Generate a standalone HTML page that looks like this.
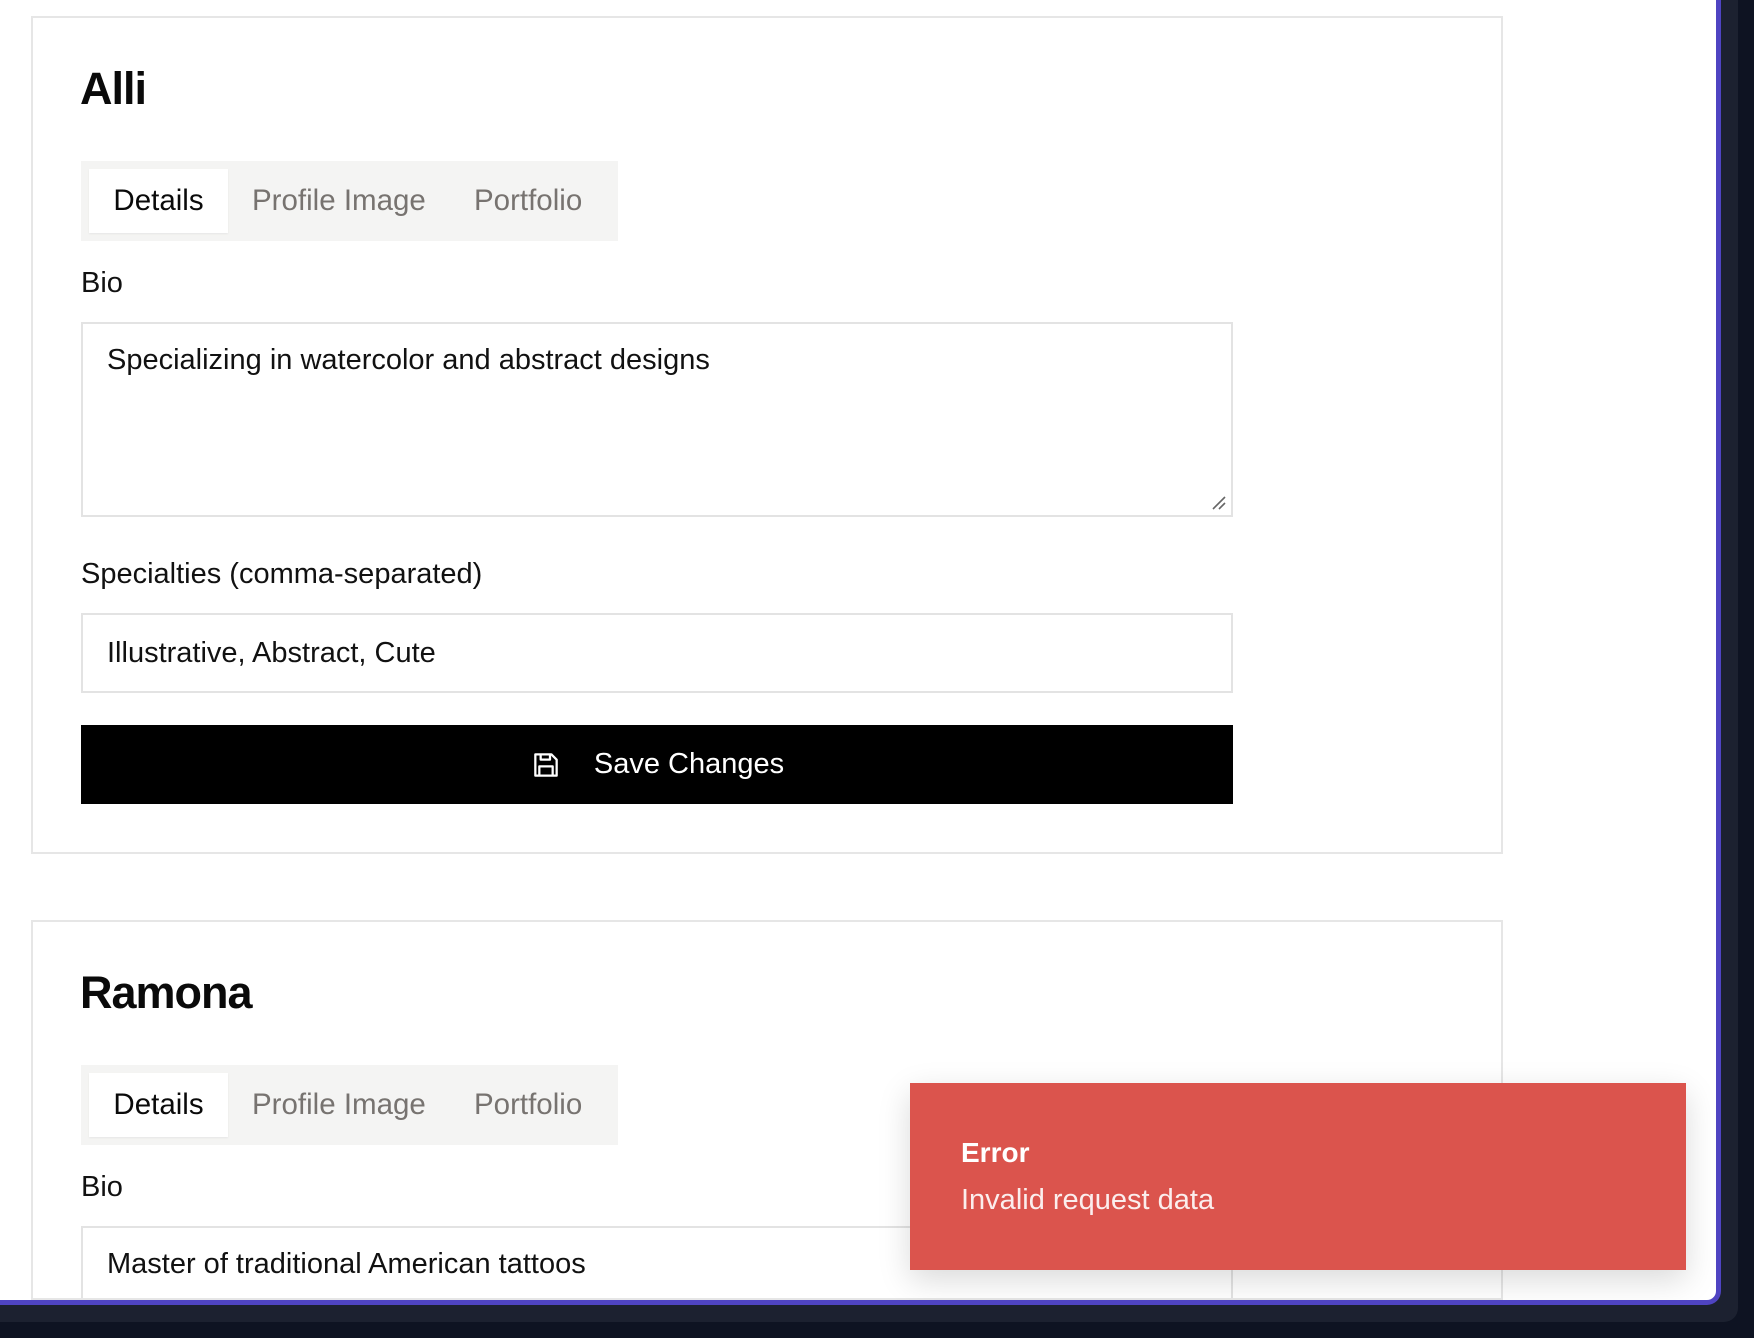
<!DOCTYPE html>
<html><head><meta charset="utf-8"><style>
*{box-sizing:border-box;margin:0;padding:0}
html,body{width:1754px;height:1338px;overflow:hidden;background:#0e1322;font-family:"Liberation Sans",sans-serif}
.outer{position:absolute;left:0;top:0;width:1738px;height:1322px;background:#1c2130;border-bottom-right-radius:14px}
.panel{position:absolute;left:-20px;top:-20px;width:1741px;height:1325px;background:#fff;border:5px solid #4f44c2;border-top:none;border-left:none;border-bottom-right-radius:14px;overflow:hidden}
.card{position:absolute;left:51px;width:1472px;border:2px solid #e6e6e6;background:#fff;overflow:hidden}
.abs{position:absolute}
h2{position:absolute;left:47px;font-size:45px;font-weight:bold;color:#0a0a0a;letter-spacing:-1px}
.tabs{position:absolute;left:48px;width:537px;height:80px;background:#f4f4f3}
.tab{position:absolute;top:0;height:80px;line-height:80px;font-size:29.5px;color:#777370}
.tab.act{top:8px;height:64px;line-height:64px;background:#fff;color:#0a0a0a;left:8px;width:139px;text-align:center;box-shadow:0 1px 2px rgba(0,0,0,.06)}
.label{position:absolute;left:48px;font-size:29px;color:#111}
.box{position:absolute;left:48px;width:1152px;border:2px solid #e3e3e3;font-size:29px;color:#111;padding-left:24px}
.btn{position:absolute;left:48px;width:1152px;height:79px;background:#000;color:#fff;font-size:29px;display:flex;align-items:center;justify-content:center}
</style></head><body>
<div class="outer"></div>
<div class="panel">
 <div class="card" style="top:36px;height:838px">
  <h2 style="top:45px">Alli</h2>
  <div class="tabs" style="top:143px">
   <div class="tab act">Details</div>
   <div class="tab" style="left:171px">Profile Image</div>
   <div class="tab" style="left:393px">Portfolio</div>
  </div>
  <div class="label" style="top:249px">Bio</div>
  <div class="box" style="top:304px;height:195px;padding-top:20px">Specializing in watercolor and abstract designs
   <svg class="abs" style="right:4px;bottom:4px" width="16" height="16"><path d="M2 14L14 2M8 14L14 8" stroke="#666" stroke-width="1.6"/></svg></div>
  <div class="label" style="top:540px">Specialties (comma-separated)</div>
  <div class="box" style="top:595px;height:80px;line-height:76px">Illustrative, Abstract, Cute</div>
  <div class="btn" style="top:707px">
   <svg width="32" height="32" viewBox="0 0 24 24" fill="none" stroke="#fff" stroke-width="1.7" stroke-linejoin="round" style="margin-right:32px"><path d="M4 4h12l4 4v12H4z"/><path d="M8 4v4h7V4"/><path d="M7 20v-7h10v7"/></svg>Save Changes</div>
 </div>
 <div class="card" style="top:940px;height:380px">
  <h2 style="top:45px">Ramona</h2>
  <div class="tabs" style="top:143px">
   <div class="tab act">Details</div>
   <div class="tab" style="left:171px">Profile Image</div>
   <div class="tab" style="left:393px">Portfolio</div>
  </div>
  <div class="label" style="top:249px">Bio</div>
  <div class="box" style="top:304px;height:195px;padding-top:20px">Master of traditional American tattoos</div>
 </div>
 <div class="abs" style="left:930px;top:1103px;width:776px;height:187px;background:#db544d;box-shadow:0 10px 30px rgba(0,0,0,.15);color:#fff">
  <div class="abs" style="left:51px;top:54px;font-size:28px;font-weight:bold">Error</div>
  <div class="abs" style="left:51px;top:101px;font-size:29px;opacity:.9">Invalid request data</div>
 </div>
</div>
</body></html>
